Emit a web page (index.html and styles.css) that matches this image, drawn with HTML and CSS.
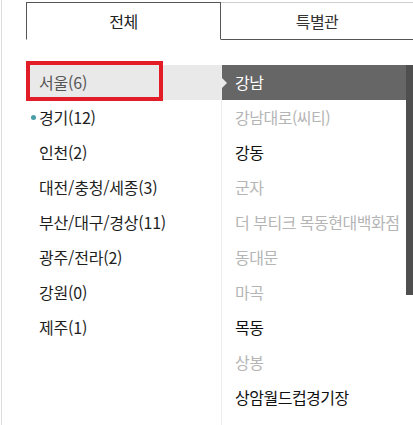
FILE: index.html
```html
<!DOCTYPE html>
<html lang="ko">
<head>
<meta charset="utf-8">
<link rel="stylesheet" href="styles.css">
</head>
<body>
<div class="frame">
  <div class="tabs">
    <div class="tab active">전체</div>
    <div class="tab">특별관</div>
  </div>
  <div class="content">
    <ul class="regions">
      <li class="region selected"><span>서울(6)</span><i class="mark"></i><i class="pointer"></i></li>
      <li class="region dotted">경기(12)</li>
      <li class="region">인천(2)</li>
      <li class="region">대전/충청/세종(3)</li>
      <li class="region">부산/대구/경상(11)</li>
      <li class="region">광주/전라(2)</li>
      <li class="region">강원(0)</li>
      <li class="region">제주(1)</li>
    </ul>
    <div class="theaters">
      <ul class="tlist">
        <li class="theater current">강남</li>
        <li class="theater off">강남대로(씨티)</li>
        <li class="theater">강동</li>
        <li class="theater off">군자</li>
        <li class="theater off">더 부티크 목동현대백화점</li>
        <li class="theater off">동대문</li>
        <li class="theater off">마곡</li>
        <li class="theater">목동</li>
        <li class="theater off">상봉</li>
        <li class="theater">상암월드컵경기장</li>
        <li class="theater">성수</li>
      </ul>
      <div class="scrollbar"><div class="thumb"></div></div>
    </div>
  </div>
</div>
</body>
</html>
```
FILE: styles.css
```css
html, body {
  margin: 0;
  padding: 0;
  background: #fff;
}
body {
  font-family: "Noto Sans CJK KR", "Noto Sans", sans-serif;
  color: #222;
  height: 425px;
  overflow: hidden;
}
.frame {
  margin-left: 1px;
  border-left: 1px solid #dcdcdc;
  height: 425px;
  box-sizing: border-box;
}
.tabs {
  display: flex;
  margin-left: 24px;
  padding-top: 2px;
}
.tab {
  box-sizing: border-box;
  height: 38px;
  display: flex;
  align-items: center;
  justify-content: center;
  font-size: 16px;
  letter-spacing: -0.5px;
  color: #333;
  flex: 1;
  border-top: 1px solid #cfcfcf;
  border-bottom: 1px solid #555;
}
.tab.active {
  flex: 0 0 195px;
  border: 1px solid #555;
  border-bottom: 1px solid #fff;
  color: #222;
}
.content {
  display: flex;
  padding-top: 25px;
}
.regions {
  list-style: none;
  margin: 0 0 0 24px;
  padding: 0;
  width: 195px;
  flex: 0 0 195px;
}
.region {
  position: relative;
  height: 35px;
  line-height: 35px;
  padding-left: 13px;
  font-size: 16px;
  letter-spacing: -0.2px;
  color: #1e1e1e;
}
.region.selected {
  background: #e9e9e9;
  color: #555;
}
.region.dotted::before {
  content: "";
  position: absolute;
  left: 5px;
  top: 15px;
  width: 5px;
  height: 5px;
  border-radius: 50%;
  background: #4a9ea8;
}
.mark {
  position: absolute;
  left: 0;
  top: -4px;
  width: 137px;
  height: 40px;
  box-sizing: border-box;
  border: 4px solid #e31d27;
  z-index: 3;
}
.pointer {
  position: absolute;
  right: -6px;
  top: 13px;
  width: 0;
  height: 0;
  border-left: 5px solid #e9e9e9;
  border-top: 5px solid transparent;
  border-bottom: 5px solid transparent;
  z-index: 2;
}
.theaters {
  flex: 1;
  display: flex;
  border-left: 1px solid #ececec;
  height: 360px;
}
.tlist {
  list-style: none;
  margin: 0;
  padding: 0;
  flex: 1;
  min-width: 0;
}
.theater {
  height: 35px;
  line-height: 35px;
  padding-left: 13px;
  font-size: 16px;
  letter-spacing: -0.5px;
  color: #111;
  white-space: nowrap;
}
.theater.off {
  color: #b5b5b5;
}
.theater.current {
  background: #666;
  color: #fff;
}
.scrollbar {
  flex: 0 0 7px;
}
.thumb {
  height: 230px;
  background: #4f4f4f;
}
```
